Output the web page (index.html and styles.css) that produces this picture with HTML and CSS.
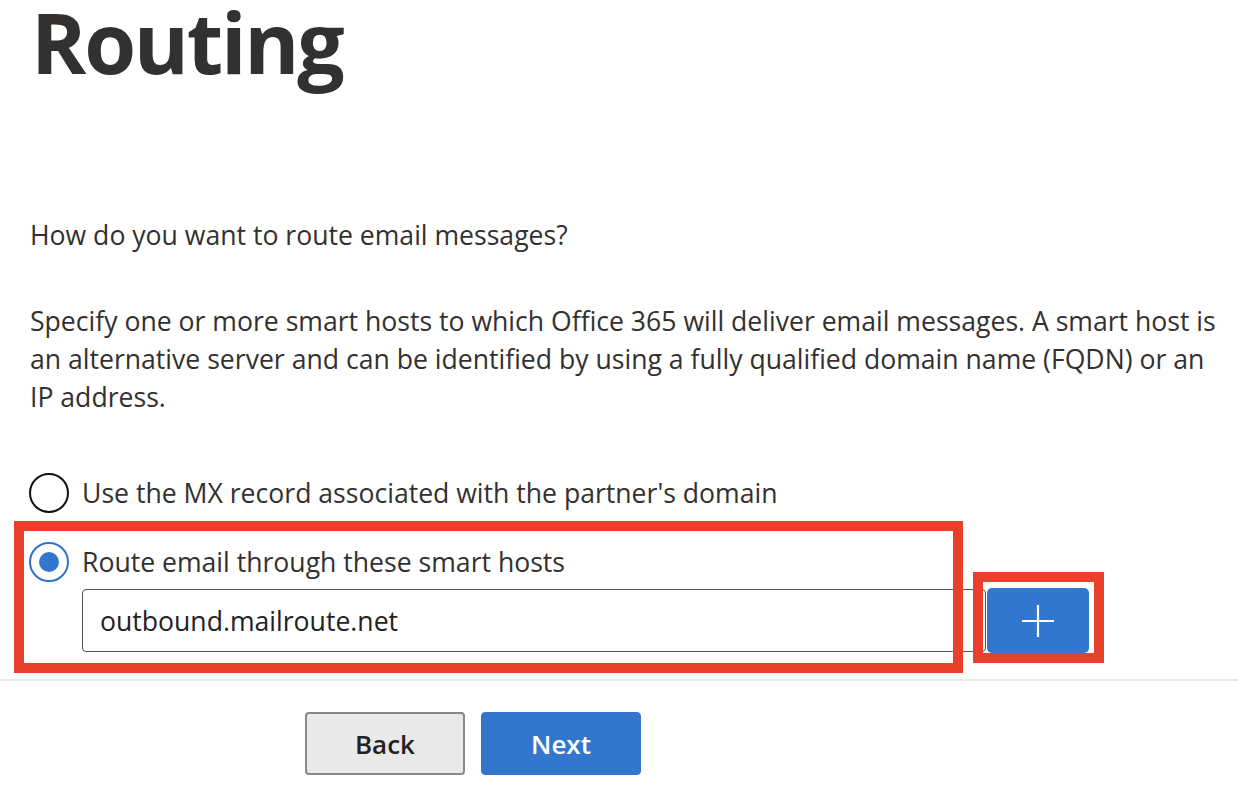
FILE: index.html
```html
<!DOCTYPE html>
<html>
<head>
<meta charset="utf-8">
<link rel="stylesheet" href="styles.css">
</head>
<body>
<div class="page">
  <h1 class="title">Routing</h1>
  <p class="question">How do you want to route email messages?</p>
  <p class="desc">Specify one or more smart hosts to which Office 365 will deliver email messages. A smart host is an alternative server and can be identified by using a fully qualified domain name (FQDN) or an IP address.</p>
  <div class="options">
    <label class="option">
      <span class="radio"></span>
      <span class="option-text">Use the MX record associated with the partner's domain</span>
    </label>
    <label class="option">
      <span class="radio checked"><span class="dot"></span></span>
      <span class="option-text">Route email through these smart hosts</span>
    </label>
    <div class="host-row">
      <div class="host-input">outbound.mailroute.net</div>
      <button class="add-btn" aria-label="Add">
        <svg width="34" height="34" viewBox="0 0 34 34"><path d="M17 1V33M1 17H33" stroke="#fff" stroke-width="2.2" fill="none"/></svg>
      </button>
      <span class="mark mark-hosts"></span>
      <span class="mark mark-add"></span>
    </div>
  </div>
</div>
<div class="footer">
  <button class="btn btn-back">Back</button>
  <button class="btn btn-next">Next</button>
</div>
</body>
</html>
```
FILE: styles.css
```css
html, body {
  margin: 0;
  padding: 0;
  background: #ffffff;
}
body {
  font-family: "Open Sans", "Noto Sans", sans-serif;
  color: #323130;
  width: 1238px;
  height: 794px;
  overflow: hidden;
}
.page {
  padding: 0 0 0 30px;
  height: 679px;
  box-sizing: border-box;
}
.title {
  margin: 0 0 0 1px;
  font-size: 84px;
  line-height: 84px;
  font-weight: 700;
  letter-spacing: -2.3px;
  color: #323130;
}
.question {
  margin: 132px 0 0 0;
  font-size: 26.6px;
  line-height: 38px;
}
.desc {
  margin: 48px 0 0 0;
  font-size: 26.6px;
  line-height: 38px;
  width: 1196px;
}
.options {
  position: relative;
  margin-top: 55px;
}
.option {
  display: flex;
  align-items: center;
  gap: 13px;
  height: 44px;
  font-size: 26.6px;
}
.option + .option {
  margin-top: 25px;
}
.radio {
  width: 40px;
  height: 40px;
  box-sizing: border-box;
  border: 2px solid #111;
  border-radius: 50%;
  display: flex;
  align-items: center;
  justify-content: center;
  flex: none;
  margin-left: -1px;
}
.radio.checked {
  border-color: #2f72cd;
}
.dot {
  width: 20px;
  height: 20px;
  border-radius: 50%;
  background: #3277cd;
}
.host-row {
  position: relative;
  display: flex;
  align-items: center;
  margin-left: 52px;
  margin-top: 4px;
}
.host-input {
  width: 904px;
  height: 63px;
  box-sizing: border-box;
  border: 1.5px solid #555;
  border-radius: 4px;
  padding: 0 17px;
  display: flex;
  align-items: center;
  font-size: 26.6px;
  color: #222;
}
.add-btn {
  width: 102px;
  height: 65px;
  margin-left: 1px;
  border: none;
  border-radius: 5px;
  background: #3277cd;
  display: flex;
  align-items: center;
  justify-content: center;
  padding: 0;
}
.mark {
  position: absolute;
  border: 10px solid #e8402a;
  box-sizing: border-box;
  pointer-events: none;
}
.mark-hosts {
  left: -68px;
  top: -67px;
  width: 949px;
  height: 152px;
}
.mark-add {
  left: 891px;
  top: -16px;
  width: 131px;
  height: 91px;
}
.footer {
  border-top: 2px solid #edebe9;
  display: flex;
  gap: 16px;
  padding: 31px 0 0 305px;
}
.btn {
  width: 160px;
  height: 63px;
  border-radius: 4px;
  font-family: "Open Sans", "Noto Sans", sans-serif;
  font-size: 26px;
  font-weight: 600;
  padding: 0;
}
.btn-back {
  background: #e9e9e9;
  border: 2px solid #8a8886;
  color: #222;
}
.btn-next {
  background: #3277cd;
  border: 1px solid #3277cd;
  color: #fff;
}
```
